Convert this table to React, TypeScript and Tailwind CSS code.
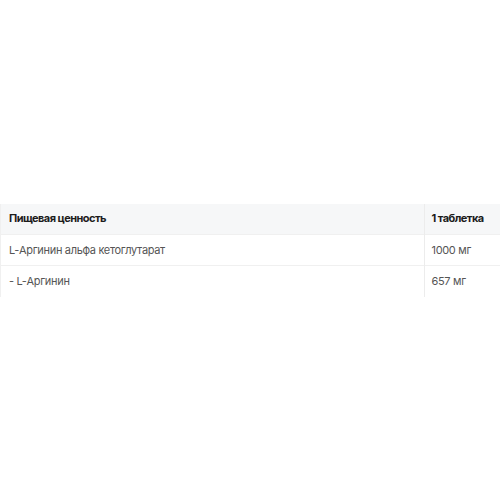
export default function App() {
  const rows = [
    { name: 'L-Аргинин альфа кетоглутарат', value: '1000 мг' },
    { name: '- L-Аргинин', value: '657 мг' },
  ]

  return (
    <div className="h-[500px] w-[500px] bg-white flex items-center font-['Inter',sans-serif]">
      <table className="w-full border-collapse text-[11px] tracking-[-0.03em] leading-none whitespace-nowrap">
        <thead>
          <tr className="bg-[#f6f7f8] h-[31px]">
            <th className="text-left font-bold tracking-[-0.05em] text-[#1c1c1c] px-2 border-l border-[#f0f0f0]">Пищевая ценность</th>
            <th className="text-left font-bold tracking-[-0.05em] text-[#1c1c1c] px-[7px] w-[76px] border-l border-[#ececec]">1 таблетка</th>
          </tr>
        </thead>
        <tbody>
          {rows.map((r) => (
            <tr key={r.name} className="h-[31px] border-t border-[#f0f0f0]">
              <td className="px-2 text-[#555] border-l border-[#f0f0f0]">{r.name}</td>
              <td className="px-[7px] text-[#555] border-l border-[#ececec]">{r.value}</td>
            </tr>
          ))}
        </tbody>
      </table>
    </div>
  )
}
